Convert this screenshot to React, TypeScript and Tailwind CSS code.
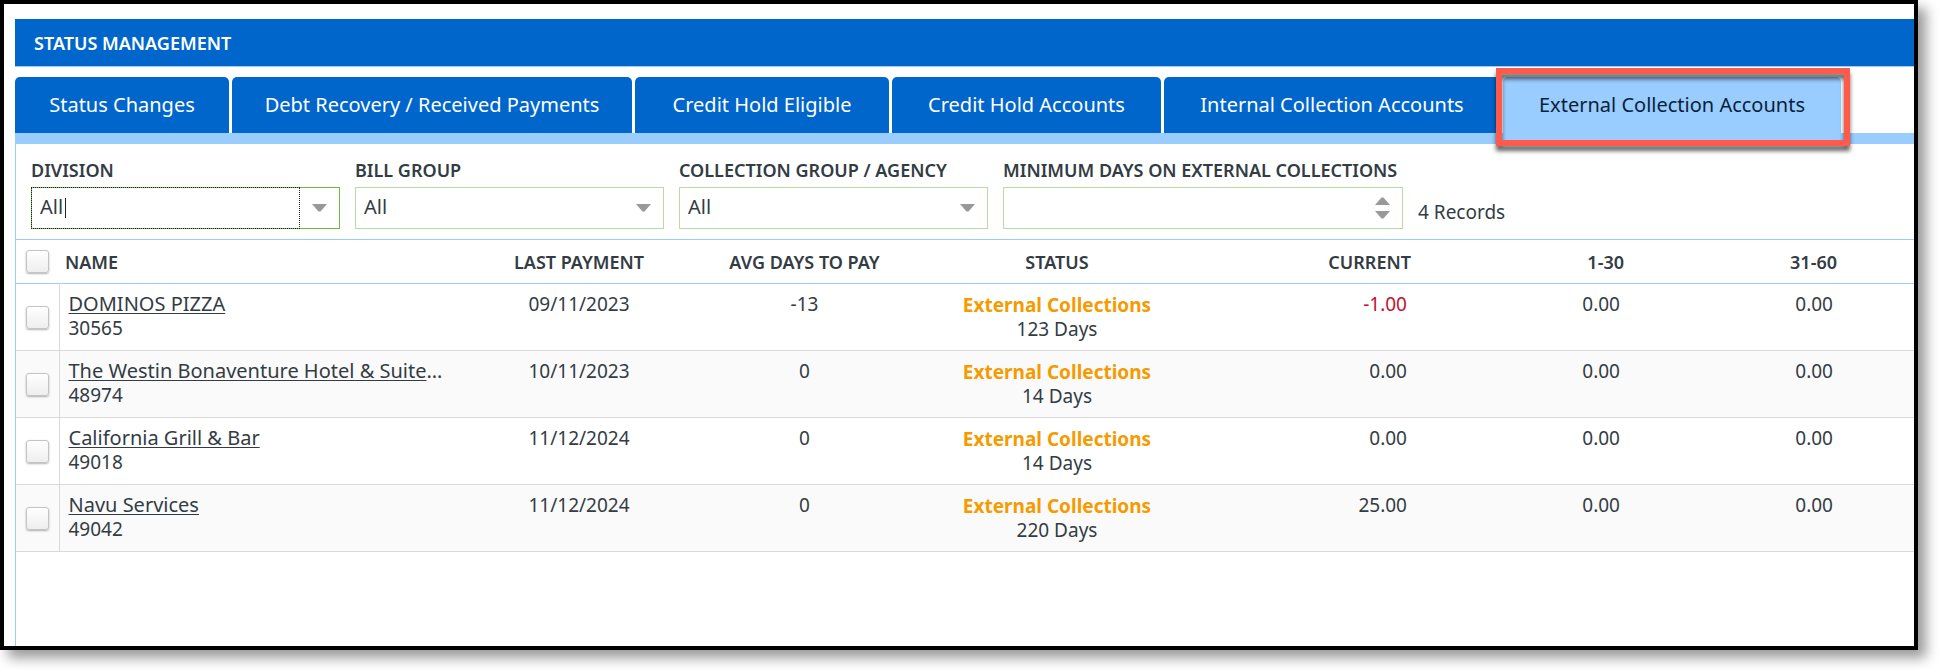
const tabs = [
  { label: "Status Changes", width: "w-[214px]" },
  { label: "Debt Recovery / Received Payments", width: "w-[400px]" },
  { label: "Credit Hold Eligible", width: "w-[254px]" },
  { label: "Credit Hold Accounts", width: "w-[269px]" },
  { label: "Internal Collection Accounts", width: "w-[336px]" },
  { label: "External Collection Accounts", width: "w-[338px]", active: true },
];

const rows = [
  { name: "DOMINOS PIZZA", id: "30565", last: "09/11/2023", avg: "-13", days: "123 Days", current: "-1.00" },
  { name: "The Westin Bonaventure Hotel & Suite", cut: true, id: "48974", last: "10/11/2023", avg: "0", days: "14 Days", current: "0.00" },
  { name: "California Grill & Bar", id: "49018", last: "11/12/2024", avg: "0", days: "14 Days", current: "0.00" },
  { name: "Navu Services", id: "49042", last: "11/12/2024", avg: "0", days: "220 Days", current: "25.00" },
];

const labelClass = "mb-[5px] block text-[18px] leading-6 font-semibold whitespace-nowrap";

function Caret({ up = false }: { up?: boolean }) {
  return (
    <svg viewBox="0 0 15 8" className="block h-2 w-[15px] fill-[#999999]" aria-hidden="true">
      <path d={up ? "M0 8L6.5 0.5h2L15 8z" : "M0 0L6.5 7.5h2L15 0z"} />
    </svg>
  );
}

function Combo({ id, label, focused = false }: { id: string; label: string; focused?: boolean }) {
  return (
    <div className="w-[309px]">
      <label htmlFor={id} className={labelClass}>{label}</label>
      <div className={focused ? "flex h-[42px] border border-[#6cbb3c]" : "flex h-[42px] border border-[#b5dd9d]"}>
        <div className={focused ? "relative -m-px flex flex-1 items-center border border-dotted border-[#222222]" : "relative flex flex-1 items-center"}>
          <input
            id={id}
            type="text"
            defaultValue="All"
            className="h-full w-full bg-transparent pb-1 pl-2 text-[20px] outline-none"
          />
          {focused && <span className="absolute top-[10px] left-[33px] h-5 w-px bg-[#222222]" />}
        </div>
        <button type="button" aria-label={label} className="flex w-10 items-center justify-center">
          <Caret />
        </button>
      </div>
    </div>
  );
}

function Check({ label }: { label: string }) {
  return (
    <input
      type="checkbox"
      aria-label={label}
      className="mx-auto block size-[23px] appearance-none rounded-[3px] border border-[#c4c4c4] bg-linear-to-b from-white to-[#eeeeee] shadow-[0_1px_2px_rgba(0,0,0,0.3)]"
    />
  );
}

export default function App() {
  return (
    <div className="min-h-screen bg-white pr-5 pb-5 font-['Noto_Sans','Open_Sans',sans-serif] text-[#333c44]">
      <div className="flex h-[calc(100vh-20px)] min-h-[600px] flex-col overflow-hidden border-4 border-black bg-white pt-[15px] pl-[11px] shadow-[8px_8px_12px_rgba(0,0,0,0.4)]">
        <header className="flex h-12 shrink-0 items-center border-b border-[#99ccff] bg-[#0066cc] pt-[2px] pl-[19px]">
          <h1 className="text-[18px] font-semibold text-white">STATUS MANAGEMENT</h1>
        </header>

        <nav className="mt-[10px] flex shrink-0 gap-[3px] border-b-[11px] border-[#99ccff]">
          {tabs.map((t) => (
            <div key={t.label} className={`relative ${t.width}`}>
              <button
                type="button"
                className={
                  t.active
                    ? "h-14 w-full rounded-t-[5px] bg-[#99ccff] text-[20px] whitespace-nowrap text-[#0b1f38]"
                    : "h-14 w-full rounded-t-[5px] bg-[#0066cc] text-[20px] whitespace-nowrap text-white"
                }
              >
                {t.label}
              </button>
              {t.active && (
                <span className="pointer-events-none absolute -top-[9px] -right-[9px] -bottom-[13px] -left-[7px] z-10 border-[6px] border-[#ff5a4b] drop-shadow-[0_5px_2px_rgba(0,0,0,0.6)]" />
              )}
            </div>
          ))}
        </nav>

        <main className="flex-1 border-l border-[#99ccff]">
          <form className="flex items-start gap-[15px] pt-[14px] pb-[10px] pl-[15px]">
            <Combo id="division" label="DIVISION" focused />
            <Combo id="bill-group" label="BILL GROUP" />
            <Combo id="agency" label="COLLECTION GROUP / AGENCY" />
            <div className="w-[400px]">
              <label htmlFor="min-days" className={labelClass}>MINIMUM DAYS ON EXTERNAL COLLECTIONS</label>
              <div className="flex h-[42px] border border-[#b5dd9d]">
                <input id="min-days" type="text" className="h-full min-w-0 flex-1 bg-transparent pl-2 text-[20px] outline-none" />
                <div className="flex w-10 flex-col items-center justify-center gap-[6px]">
                  <button type="button" aria-label="Increase"><Caret up /></button>
                  <button type="button" aria-label="Decrease"><Caret /></button>
                </div>
              </div>
            </div>
            <p className="self-end pb-[5px] text-[19px] leading-6">4 Records</p>
          </form>

          <table className="w-full table-fixed border-collapse text-[19px] leading-6">
            <colgroup>
              <col className="w-[43px]" />
              <col className="w-[407px]" />
              <col className="w-[226px]" />
              <col className="w-[225px]" />
              <col className="w-[280px]" />
              <col className="w-[221px]" />
              <col className="w-[213px]" />
              <col className="w-[213px]" />
              <col />
            </colgroup>
            <thead>
              <tr className="h-11 border-y border-[#99ccff] text-[18px] [&>th]:font-semibold">
                <th><Check label="Select all" /></th>
                <th className="pl-[6px] text-left">NAME</th>
                <th>LAST PAYMENT</th>
                <th>AVG DAYS TO PAY</th>
                <th>STATUS</th>
                <th className="pr-[7px] text-right">CURRENT</th>
                <th className="pr-[7px] text-right">1-30</th>
                <th className="pr-[7px] text-right">31-60</th>
                <th />
              </tr>
            </thead>
            <tbody>
              {rows.map((r) => (
                <tr key={r.id} className="h-[67px] border-b border-[#d9d9d9] align-top even:bg-[#fafafa]">
                  <td className="border-r border-[#d9d9d9] align-middle"><Check label={`Select ${r.name}`} /></td>
                  <td className="pt-2 pl-[9px]">
                    <div className="text-[20px] leading-6 whitespace-nowrap">
                      <a href="#" className="underline decoration-1 underline-offset-2">{r.name}</a>
                      {r.cut && "…"}
                    </div>
                    <div>{r.id}</div>
                  </td>
                  <td className="pt-2 text-center">{r.last}</td>
                  <td className="pt-2 text-center">{r.avg}</td>
                  <td className="pt-[9px] text-center">
                    <div className="font-bold text-[#f59b00]">External Collections</div>
                    <div>{r.days}</div>
                  </td>
                  <td className={r.current.startsWith("-") ? "pt-2 pr-[11px] text-right text-[#c41230]" : "pt-2 pr-[11px] text-right"}>{r.current}</td>
                  <td className="pt-2 pr-[11px] text-right">0.00</td>
                  <td className="pt-2 pr-[11px] text-right">0.00</td>
                  <td />
                </tr>
              ))}
            </tbody>
          </table>
        </main>
      </div>
    </div>
  );
}
